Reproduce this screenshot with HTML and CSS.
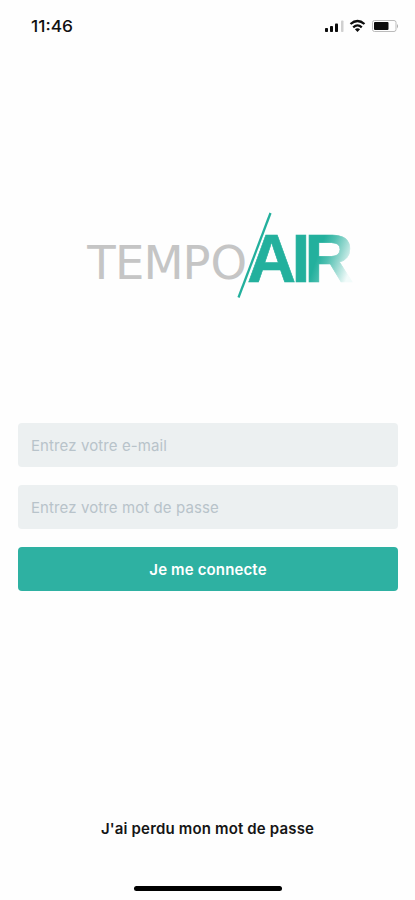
FILE: index.html
```html
<!DOCTYPE html>
<html lang="fr">
<head>
<meta charset="utf-8">
<meta name="viewport" content="width=device-width, initial-scale=1">
<title>TempoAir</title>
<link rel="stylesheet" href="styles.css">
</head>
<body>
<main class="screen">
  <header class="status">
    <svg class="time" width="44" height="20" viewBox="0 0 44 20"><text x="0" y="15.5" textLength="42" lengthAdjust="spacingAndGlyphs">11:46</text></svg>
    <svg class="indicators" width="76" height="16" viewBox="0 0 76 16" aria-hidden="true">
      <rect x="1" y="10" width="3" height="4" rx=".8"/>
      <rect x="6" y="8" width="3" height="6" rx=".8"/>
      <rect x="11" y="5.5" width="3" height="8.500" rx=".8"/>
      <rect class="dim" x="17" y="2.500" width="2.500" height="11.500" rx=".8"/>
      <g class="wifi">
        <path d="M26.500 6Q33.500 0 40.500 6"/>
        <path d="M29.200 9.300Q33.500 5.500 37.800 9.300"/>
      </g>
      <path d="M30.900 11.300Q33.500 9.300 36.100 11.300L33.500 14Z"/>
      <rect class="case" x="48.500" y="2.500" width="23.500" height="11" rx="2"/>
      <rect x="50" y="4" width="14.500" height="8" rx="1"/>
      <path class="cap" d="M73 6q2 2.200 0 4.500z"/>
    </svg>
  </header>

  <section class="brand">
    <svg class="logo" width="270" height="92" viewBox="84 209 270 92" role="img" aria-label="TempoAir">
      <defs>
        <linearGradient id="fade" gradientUnits="userSpaceOnUse" x1="319" y1="252" x2="352" y2="264">
          <stop offset="0" stop-color="#23b09d"/>
          <stop offset=".3" stop-color="#50c0b1"/>
          <stop offset=".6" stop-color="#93d7ce"/>
          <stop offset="1" stop-color="#f2fbfa"/>
        </linearGradient>
      </defs>
      <text class="tempo" y="279" x="87.300 115 143.500 182.500 210.500">TEMPO</text>
      <path class="slash" d="M270.500 213L238.500 297.500"/>
      <text class="air" y="282" x="247 291.500 304.500">AIR</text>
    </svg>
  </section>

  <form class="login">
    <input class="field" type="email" placeholder="Entrez votre e-mail">
    <input class="field" type="password" placeholder="Entrez votre mot de passe">
    <button class="submit" type="button">Je me connecte</button>
  </form>

  <footer class="footer">
    <a class="forgot">J'ai perdu mon mot de passe</a>
    <div class="home-bar"></div>
  </footer>
</main>
</body>
</html>
```

FILE: styles.css
```css
* { box-sizing: border-box; }

body {
  margin: 0;
  background: #fefefe;
  font-family: Inter, "Liberation Sans", sans-serif;
}

.screen {
  display: flex;
  flex-direction: column;
  height: 900px;
}

.status {
  display: flex;
  justify-content: space-between;
  align-items: flex-start;
  height: 60px;
  padding: 16px 15px 0 31px;
}

.time {
  font-size: 16px;
  font-weight: 500;
  fill: #111;
}

.indicators { margin-top: 2px; fill: #0c0c0c; }
.dim { fill: #d0d0d0; }
.wifi { fill: none; stroke: #0c0c0c; stroke-width: 2.3; }
.case { fill: none; stroke: #bbb; }
.cap { fill: #aaa; }

.brand {
  height: 363px;
  padding: 149px 0 0 84px;
}

.logo { display: block; }
.tempo { font-family: "DejaVu Sans", sans-serif; font-size: 46.500px; fill: #c5c5c5; }
.slash { fill: none; stroke: #23b09d; stroke-width: 2.300; }
.air {
  font-family: "Liberation Sans", sans-serif;
  font-size: 68px;
  font-weight: 700;
  fill: url(#fade);
  stroke: url(#fade);
  stroke-width: .6;
}

.login {
  display: flex;
  flex-direction: column;
  gap: 18px;
  padding: 0 17px 0 18px;
}

.field, .submit {
  width: 100%;
  height: 44px;
  border: 0;
  border-radius: 4px;
  font-family: inherit;
  font-size: 15px;
  letter-spacing: .1px;
}

.field {
  padding: 1px 13px 0;
  background: #ecf0f1;
  color: #33424a;
}

.field::placeholder { color: #b8c3ca; opacity: 1; }

.submit {
  padding: 0;
  background: #2eb1a2;
  color: #fff;
  font-weight: 600;
  letter-spacing: .14px;
}

.footer {
  display: flex;
  flex-direction: column;
  align-items: center;
  justify-content: space-between;
  height: 72px;
  margin-top: auto;
  padding-bottom: 9px;
}

.forgot {
  color: #151515;
  font-size: 15px;
  font-weight: 600;
  line-height: 20px;
  letter-spacing: .16px;
  margin-top: -9px;
}

.home-bar {
  width: 148px;
  height: 5px;
  border-radius: 3px;
  background: #000;
}
```
